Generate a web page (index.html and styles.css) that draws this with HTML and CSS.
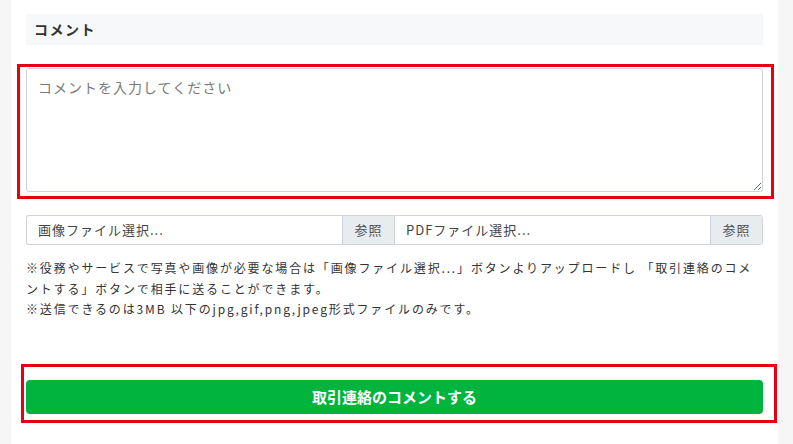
FILE: index.html
```html
<!DOCTYPE html>
<html lang="ja">
<head>
  <meta charset="UTF-8">
  <meta name="viewport" content="width=device-width, initial-scale=1.0">
  <title>取引連絡</title>
  <link rel="stylesheet" href="styles.css">
</head>
<body>
  <div class="card">
    <h3 class="card-title">コメント</h3>

    <div class="marked marked-comment">
      <textarea class="comment-box" placeholder="コメントを入力してください"></textarea>
    </div>

    <div class="file-row">
      <div class="file-group">
        <span class="file-label">画像ファイル選択...</span>
        <span class="file-btn">参照</span>
      </div>
      <div class="file-group">
        <span class="file-label">PDFファイル選択...</span>
        <span class="file-btn">参照</span>
      </div>
    </div>

    <p class="notes">
      ※役務やサービスで写真や画像が必要な場合は「画像ファイル選択...」ボタンよりアップロードし 「取引連絡のコメントする」ボタンで相手に送ることができます。<br>
      ※送信できるのは3MB 以下のjpg,gif,png,jpeg形式ファイルのみです。
    </p>

    <div class="marked marked-submit">
      <button class="submit-btn">取引連絡のコメントする</button>
    </div>
  </div>
</body>
</html>
```

FILE: styles.css
```css
body {
  font-family: "Noto Sans CJK JP", "Noto Sans", sans-serif;
  background-color: #f6f6f6;
  margin: 0;
  color: #333;
}

.card {
  background-color: #fff;
  margin-left: 11px;
  width: 737px;
  min-height: 430px;
  padding: 14px 15px 0;
}

.card-title {
  margin: 0;
  height: 31px;
  line-height: 31px;
  padding-left: 8px;
  background-color: #f7f8fa;
  font-size: 14px;
  font-weight: bold;
  letter-spacing: 1.5px;
  color: #333;
}

/* red annotation frames drawn over the marked parts */
.marked {
  position: relative;
}

.marked::after {
  content: "";
  position: absolute;
  border: 3px solid #e60012;
  pointer-events: none;
}

.marked-comment {
  margin-top: 23px;
}

.marked-comment::after {
  top: -4px;
  left: -9px;
  right: -11px;
  bottom: -7px;
}

.marked-submit {
  margin-top: 60px;
}

.marked-submit::after {
  top: -16px;
  left: -5px;
  right: -14px;
  bottom: -9px;
}

.comment-box {
  display: block;
  width: 100%;
  height: 124px;
  box-sizing: border-box;
  padding: 6px 11px;
  border: 1px solid #ced4da;
  border-radius: 3px;
  font-family: inherit;
  font-size: 14px;
  letter-spacing: 1px;
  line-height: 24px;
  color: #333;
  resize: vertical;
}

.comment-box::placeholder {
  color: #7a7a7a;
}

.file-row {
  display: flex;
  margin-top: 23px;
}

.file-group {
  flex: 1;
  display: flex;
  height: 30px;
  border: 1px solid #ced4da;
  box-sizing: border-box;
  font-size: 13px;
  letter-spacing: 1px;
  line-height: 28px;
}

.file-group:first-child {
  border-radius: 3px 0 0 3px;
  border-right: none;
}

.file-group:last-child {
  border-radius: 0 3px 3px 0;
}

.file-label {
  flex: 1;
  padding-left: 11px;
  color: #444;
}

.file-btn {
  width: 51px;
  text-align: center;
  background-color: #e9ecef;
  border-left: 1px solid #ced4da;
  color: #495057;
}

.notes {
  margin: 13px 0 0;
  font-size: 12px;
  letter-spacing: 1.85px;
  line-height: 20.5px;
  color: #333;
}

.submit-btn {
  display: block;
  width: 100%;
  height: 34px;
  border: none;
  border-radius: 4px;
  background-color: #00b43e;
  color: #fff;
  font-family: inherit;
  font-size: 15px;
  font-weight: bold;
  cursor: pointer;
}
```
